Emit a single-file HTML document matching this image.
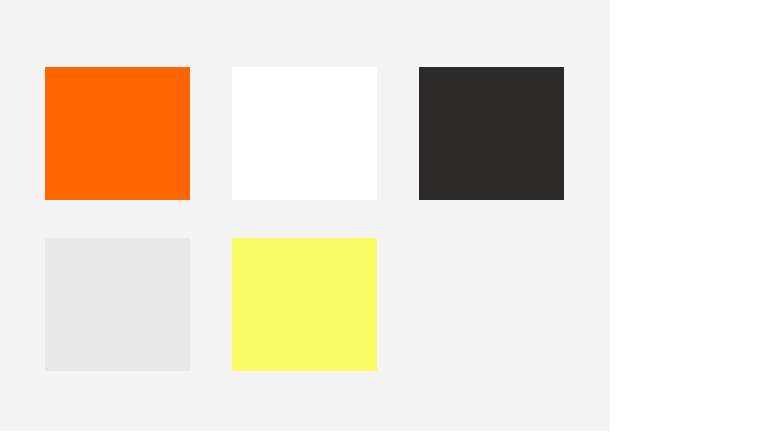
<!DOCTYPE html>
<html><head><style>
html,body{margin:0;padding:0;background:#fff;width:768px;height:432px;overflow:hidden}
.p{position:absolute;left:0;top:0;width:610px;height:431px;background:#f4f4f4}
.s{position:absolute;width:145px;height:133px}
</style></head><body>
<div class="p"></div>
<div class="s" style="left:45px;top:67px;background:#ff6600"></div>
<div class="s" style="left:232px;top:67px;background:#ffffff"></div>
<div class="s" style="left:419px;top:67px;background:#2b2a28"></div>
<div class="s" style="left:45px;top:238px;background:#e8e8e8"></div>
<div class="s" style="left:232px;top:238px;background:#fbfc63"></div>
</body></html>
